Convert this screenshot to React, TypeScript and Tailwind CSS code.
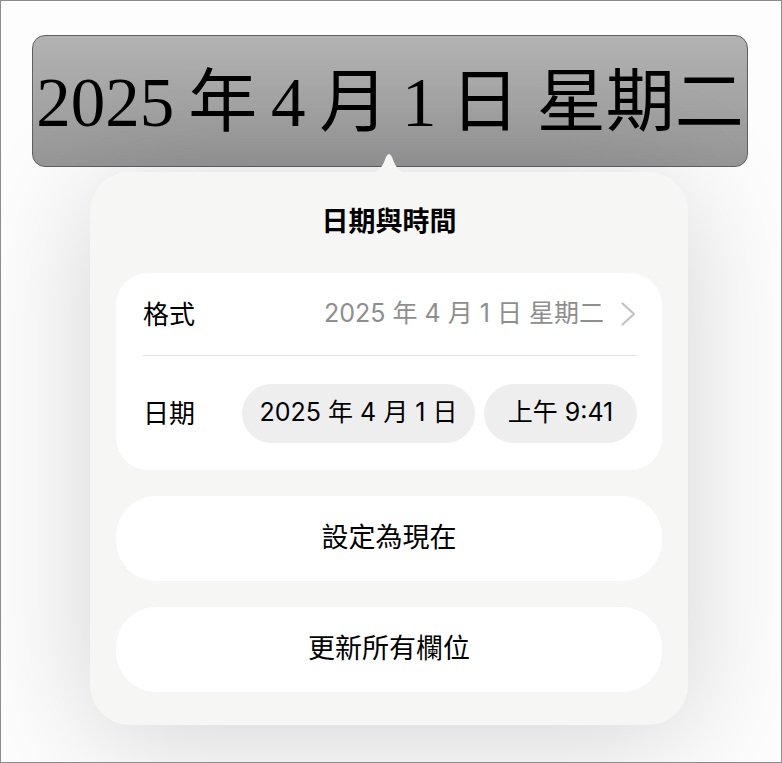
const sans = "font-['Inter','Noto_Sans_CJK_TC',sans-serif]";

const App = () => {
    return (
        <div className={`h-[763px] w-[782px] overflow-hidden border border-[#8c8c8c] bg-[#fdfdfd] ${sans}`}>
            {/* Selected date field in the document */}
            <div className="ml-[31px] mt-[34px] flex h-[132px] w-[716px] items-center justify-center rounded-[13px] border border-[#5f5f5f] bg-gradient-to-b from-[#b2b2b2] to-[#979797]">
                <span className="whitespace-nowrap pt-[4px] font-['Liberation_Serif','Noto_Sans_CJK_TC',serif] text-[69px] leading-none text-black">
                    2025{'\u2009'}年{'\u2009'}4{'\u2009'}月{'\u2009'}1{'\u2009'}日 星期二
                </span>
            </div>

            {/* Popover */}
            <div className="relative ml-[89px] mt-[5px] h-[553px] w-[598px] rounded-[40px] bg-[#f6f6f5] px-[26px] pt-[34px] shadow-[0_14px_120px_rgba(0,0,0,0.17)]">
                {/* Arrow */}
                <svg
                    className="absolute left-1/2 top-[-21px] -translate-x-1/2"
                    width="38"
                    height="22"
                    viewBox="0 0 38 22"
                >
                    <path d="M0 22 C10 22 13 14 16 6 Q19 0 22 6 C25 14 28 22 38 22 Z" fill="#f6f6f5" />
                </svg>

                <div className="text-center text-[27px] font-bold leading-[32px] text-black">日期與時間</div>

                {/* Format and date card */}
                <div className="mt-[35px] rounded-[32px] bg-white pl-[27px] pr-[25px]">
                    <div className="flex h-[83px] items-center justify-between border-b border-[#e3e3e3]">
                        <span className="text-[26px] text-black">格式</span>
                        <div className="flex items-center gap-[17px]">
                            <span className="text-[25px] text-[#8e8e8e]">2025 年 4 月 1 日 星期二</span>
                            <svg width="15" height="24" viewBox="0 0 15 24" className="mr-[1px]">
                                <path d="M1.5 1.5 L13 12 L1.5 22.5" fill="none" stroke="#c2c2c2" strokeWidth="2.2" strokeLinecap="round" strokeLinejoin="round" />
                            </svg>
                        </div>
                    </div>
                    <div className="flex h-[114px] items-center justify-between">
                        <span className="text-[26px] text-black">日期</span>
                        <div className="flex items-center gap-[9px]">
                            <span className="flex h-[59px] w-[233px] items-center justify-center rounded-full bg-[#eeeeee] text-[25px] text-black">
                                2025 年 4 月 1 日
                            </span>
                            <span className="flex h-[59px] w-[153px] items-center justify-center rounded-full bg-[#eeeeee] text-[25px] text-black">
                                上午 9:41
                            </span>
                        </div>
                    </div>
                </div>

                {/* Actions */}
                <div className="mt-[26px] flex h-[85px] items-center justify-center rounded-[40px] bg-white text-[27px] text-black">
                    設定為現在
                </div>
                <div className="mt-[26px] flex h-[85px] items-center justify-center rounded-[40px] bg-white text-[27px] text-black">
                    更新所有欄位
                </div>
            </div>
        </div>
    );
};

export default App;
